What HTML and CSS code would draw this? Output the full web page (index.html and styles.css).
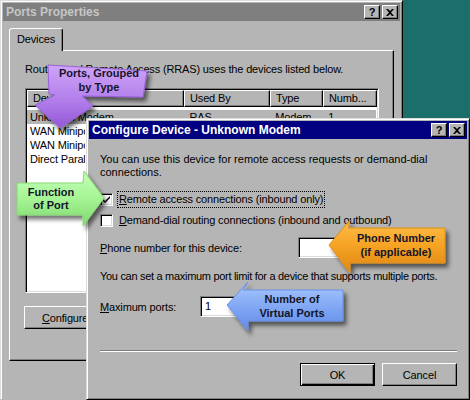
FILE: index.html
```html
<!DOCTYPE html>
<html>
<head>
<meta charset="utf-8">
<title>Ports Properties</title>
<link rel="stylesheet" href="styles.css">
</head>
<body>
<div class="win ports">
  <div class="titlebar inactive">
    <span class="title">Ports Properties</span>
    <div class="tbtns">
      <span class="tbtn">?</span>
      <span class="tbtn"><svg width="8" height="7" viewBox="0 0 8 7"><path d="M0 0h2l2 2 2-2h2L5 3.5 8 7H6L4 5 2 7H0l3-3.5z" fill="#000"/></svg></span>
    </div>
  </div>
  <div class="ports-body">
    <div class="tabs"><div class="tab">Devices</div></div>
    <div class="panel">
      <p class="intro">Routing and Remote Access (RRAS) uses the devices listed below.</p>
      <div class="list">
        <div class="lhead">
          <div class="hc c1">Device</div>
          <div class="hc c2">Used By</div>
          <div class="hc c3">Type</div>
          <div class="hc c4">Numb...</div>
        </div>
        <div class="lrows">
          <div class="lrow sel"><span class="c1">Unknown Modem</span><span class="c2">RAS</span><span class="c3">Modem</span><span class="c4">1</span></div>
          <div class="lrow"><span class="c1 cut">WAN Miniport</span></div>
          <div class="lrow"><span class="c1 cut">WAN Miniport</span></div>
          <div class="lrow"><span class="c1 cut">Direct Parallel</span></div>
        </div>
      </div>
      <div class="btn cfg"><span><u>C</u>onfigure...</span></div>
    </div>
  </div>
</div>

<div class="win dlg">
  <div class="titlebar active">
    <span class="title">Configure Device - Unknown Modem</span>
    <div class="tbtns">
      <span class="tbtn">?</span>
      <span class="tbtn"><svg width="8" height="7" viewBox="0 0 8 7"><path d="M0 0h2l2 2 2-2h2L5 3.5 8 7H6L4 5 2 7H0l3-3.5z" fill="#000"/></svg></span>
    </div>
  </div>
  <div class="dlg-body">
    <p class="txt p1">You can use this device for remote access requests or demand-dial connections.</p>
    <div class="chk first">
      <span class="box"><svg width="9" height="9" viewBox="0 0 9 9"><path d="M1 4l2 2 5-5v2L3 8 1 6z" fill="#000"/></svg></span>
      <span class="lbl focus"><u>R</u>emote access connections (inbound only)</span>
    </div>
    <div class="chk second">
      <span class="box"></span>
      <span class="lbl"><u>D</u>emand-dial routing connections (inbound and outbound)</span>
    </div>
    <div class="field phone">
      <span class="flabel phone-l"><u>P</u>hone number for this device:</span>
      <span class="input phone-i"></span>
    </div>
    <p class="txt p2">You can set a maximum port limit for a device that supports multiple ports.</p>
    <div class="field maxp">
      <span class="flabel maxp-l"><u>M</u>aximum ports:</span>
      <span class="input maxp-i">1</span>
    </div>
    <div class="sep"></div>
    <div class="btnrow">
      <div class="btn def"><span>OK</span></div>
      <div class="btn"><span>Cancel</span></div>
    </div>
  </div>
</div>

<svg class="overlay" width="470" height="400" viewBox="0 0 470 400">
  <defs>
    <filter id="sh" x="-30%" y="-30%" width="160%" height="160%">
      <feDropShadow dx="3" dy="4" stdDeviation="2.2" flood-color="#000" flood-opacity="0.55"/>
    </filter>
    <linearGradient id="gp" x1="0" y1="0" x2="0" y2="1">
      <stop offset="0" stop-color="#cfa4f7"/>
      <stop offset="0.5" stop-color="#b583ec"/>
      <stop offset="1" stop-color="#9458d8"/>
    </linearGradient>
    <linearGradient id="gg" x1="0" y1="0" x2="0" y2="1">
      <stop offset="0" stop-color="#c4ffb6"/>
      <stop offset="0.5" stop-color="#a6f496"/>
      <stop offset="1" stop-color="#7fd86c"/>
    </linearGradient>
    <linearGradient id="go" x1="0" y1="0" x2="0" y2="1">
      <stop offset="0" stop-color="#ffbf48"/>
      <stop offset="0.5" stop-color="#f5a224"/>
      <stop offset="1" stop-color="#dd8614"/>
    </linearGradient>
    <linearGradient id="gb" x1="0" y1="0" x2="0" y2="1">
      <stop offset="0" stop-color="#a8c8ff"/>
      <stop offset="0.5" stop-color="#82a8f4"/>
      <stop offset="1" stop-color="#5f8ae6"/>
    </linearGradient>
  </defs>
  <g filter="url(#sh)">
    <polygon points="48,65 147,71 143,97 82,96 93,106 60,128 35,105 55,95 49,94" fill="url(#gp)" stroke="#9a62dc" stroke-width="1"/>
    <polygon points="17,183 83,183 84,171 104,198 83,226 83,215 17,215" fill="url(#gg)" stroke="#86d874" stroke-width="1"/>
    <polygon points="348,228 445,228 445,263 350,263 350,273 329,245 350,220 348,228" fill="url(#go)" stroke="#e0901c" stroke-width="1"/>
    <polygon points="243,290 343,290 343,321 248,321 248,331 227,305 248,282 243,290" fill="url(#gb)" stroke="#6890e8" stroke-width="1"/>
  </g>
  <g class="ctext">
    <text x="99" y="77">Ports, Grouped</text>
    <text x="99" y="91">by Type</text>
    <text x="51" y="196">Function</text>
    <text x="51" y="209">of Port</text>
    <text x="396" y="242">Phone Number</text>
    <text x="396" y="256">(if applicable)</text>
    <text x="292" y="303">Number of</text>
    <text x="292" y="317">Virtual Ports</text>
  </g>
</svg>
</body>
</html>
```

FILE: styles.css
```css
* { box-sizing: border-box; }
html, body { margin: 0; padding: 0; }
html { overflow: hidden; }
body {
  width: 470px;
  height: 400px;
  overflow: hidden;
  position: relative;
  background: #1b6e6a;
  font-family: "Liberation Sans", Arial, sans-serif;
  font-size: 11px;
  letter-spacing: -0.15px;
  color: #000;
}
p { margin: 0; }
u { text-decoration: underline; text-underline-offset: 1px; }

.win {
  position: absolute;
  background: #b5b5b5;
  border: 1px solid;
  border-color: #dcdcdc #000 #000 #dcdcdc;
  box-shadow: inset 1px 1px 0 #fff, inset -1px -1px 0 #7f7f7f;
  padding: 2px;
}
.ports {
  left: 0;
  top: 0;
  width: 403px;
  height: 400px;
  border-bottom-color: #b5b5b5;
  box-shadow: inset 1px 1px 0 #fff, inset -1px 0 0 #7f7f7f;
}
.dlg { left: 86px; top: 118px; width: 384px; height: 282px; }

.titlebar {
  height: 18px;
  display: flex;
  align-items: center;
  justify-content: space-between;
  padding: 0 2px 0 3px;
  font-size: 12px;
  font-weight: bold;
  letter-spacing: 0;
}
.titlebar.inactive { background: #7f7f7f; color: #c6c6c6; }
.titlebar.active { background: #000080; color: #fff; }
.title { white-space: nowrap; }
.tbtns { display: flex; gap: 2px; }
.tbtn {
  width: 16px;
  height: 14px;
  background: #b5b5b5;
  border: 1px solid;
  border-color: #fff #000 #000 #fff;
  box-shadow: inset -1px -1px 0 #7f7f7f;
  display: flex;
  align-items: center;
  justify-content: center;
  color: #000;
  font-size: 11px;
  font-weight: bold;
  line-height: 1;
}

.ports-body { padding: 7px 6px 0 6px; }
.tabs { display: flex; height: 22px; }
.tab {
  position: relative;
  z-index: 1;
  height: 23px;
  padding: 4px 7px 0 7px;
  background: #b5b5b5;
  border: 1px solid;
  border-bottom: 0;
  border-color: #fff #000 #000 #fff;
  border-radius: 3px 3px 0 0;
  box-shadow: inset -1px 0 0 #7f7f7f;
  line-height: 13px;
}
.panel {
  width: 385px;
  height: 311px;
  border: 1px solid;
  border-color: #fff #000 #000 #fff;
  box-shadow: inset -1px -1px 0 #7f7f7f;
  padding: 12px 13px 0 15px;
}
.intro { line-height: 13px; white-space: nowrap; }

.list {
  margin-top: 12px;
  width: 354px;
  height: 205px;
  background: #fff;
  border: 1px solid;
  border-color: #7f7f7f #fff #fff #7f7f7f;
  box-shadow: inset 1px 1px 0 #000, inset -1px -1px 0 #dcdcdc;
  padding: 1px;
  overflow: hidden;
}
.lhead { display: flex; height: 17px; }
.hc {
  height: 17px;
  background: #b5b5b5;
  border: 1px solid;
  border-color: #fff #000 #000 #fff;
  box-shadow: inset -1px -1px 0 #7f7f7f;
  padding-left: 5px;
  line-height: 14px;
  white-space: nowrap;
  overflow: hidden;
}
.c1 { width: 157px; }
.c2 { width: 86px; }
.c3 { width: 53px; }
.c4 { width: 54px; }
.lrows { padding-top: 3px; }
.lrow { display: flex; height: 14px; line-height: 14px; white-space: nowrap; }
.lrow span { padding-left: 6px; overflow: hidden; }
.lrow .c1 { padding-left: 3px; }
.lrow .c1.cut { width: 58px; }
.lrow.sel { background: #b5b5b5; width: 349px; }

.btn {
  width: 75px;
  height: 23px;
  background: #b5b5b5;
  border: 1px solid;
  border-color: #fff #000 #000 #fff;
  box-shadow: inset -1px -1px 0 #7f7f7f;
  display: flex;
  align-items: center;
  justify-content: center;
}
.cfg { margin: 13px 0 0 -1px; width: 91px; height: 23px; }

.dlg-body { padding: 14px 11px 0 11px; }
.txt { line-height: 13px; width: 350px; }
.p1 { letter-spacing: 0; }
.chk { display: flex; align-items: center; height: 16px; }
.chk.first { margin-top: 12px; }
.chk.second { margin-top: 5px; }
.box {
  width: 13px;
  height: 13px;
  background: #fff;
  border: 1px solid;
  border-color: #7f7f7f #fff #fff #7f7f7f;
  box-shadow: inset 1px 1px 0 #000, inset -1px -1px 0 #dcdcdc;
  display: flex;
  align-items: center;
  justify-content: center;
}
.lbl { margin-left: 4px; padding: 1px 1px; line-height: 13px; border: 1px solid transparent; white-space: nowrap; }
.lbl.focus { border: 1px dotted #000; }

.field { display: flex; align-items: center; height: 21px; }
.field.phone { margin-top: 9px; }
.field.maxp { margin-top: 13px; }
.flabel { white-space: nowrap; }
.phone-l { width: 198px; }
.maxp-l { width: 100px; }
.input {
  height: 21px;
  background: #fff;
  border: 1px solid;
  border-color: #7f7f7f #fff #fff #7f7f7f;
  box-shadow: inset 1px 1px 0 #000, inset -1px -1px 0 #dcdcdc;
  padding: 3px 4px 0 4px;
  line-height: 13px;
}
.phone-i { width: 110px; }
.maxp-i { width: 50px; }
.p2 { margin-top: 12px; white-space: nowrap; letter-spacing: -0.3px; }

.sep {
  margin-top: 33px;
  height: 2px;
  border-top: 1px solid #7f7f7f;
  border-bottom: 1px solid #fff;
  width: 357px;
}
.btnrow { display: flex; justify-content: flex-end; gap: 7px; margin-top: 11px; width: 357px; }
.btn.def {
  border: 1px solid #000;
  box-shadow: inset 1px 1px 0 #fff, inset -1px -1px 0 #000, inset -2px -2px 0 #7f7f7f;
}

.overlay { position: absolute; left: 0; top: 0; pointer-events: none; }
.ctext text {
  font-family: "Liberation Sans", Arial, sans-serif;
  font-size: 11px;
  font-weight: bold;
  letter-spacing: 0;
  fill: #141428;
  text-anchor: middle;
}
```
